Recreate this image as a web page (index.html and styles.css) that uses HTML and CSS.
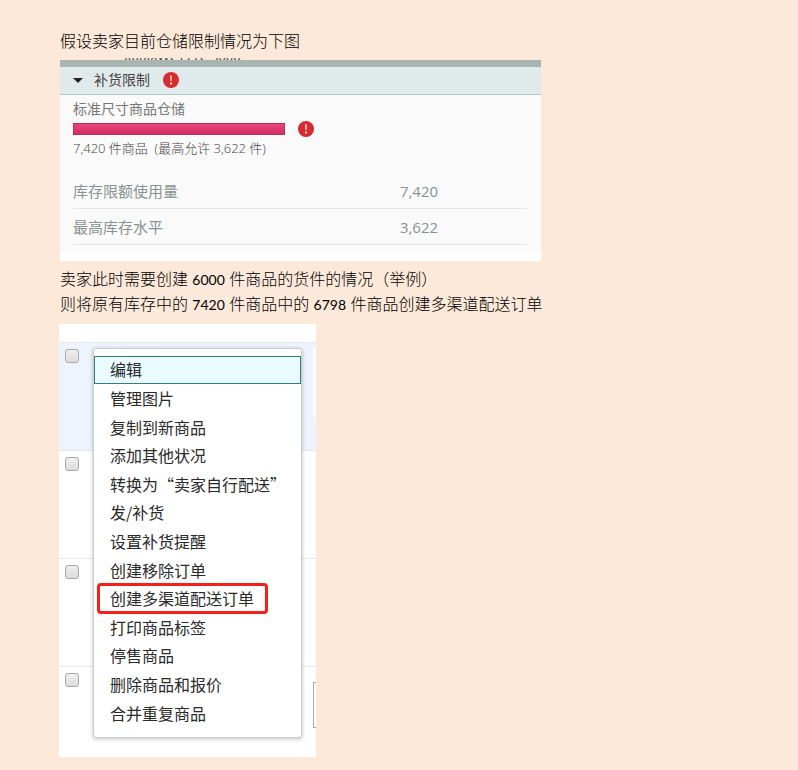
FILE: index.html
```
<!DOCTYPE html>
<html lang="zh-CN">
<head>
    <meta charset="UTF-8">
    <meta name="viewport" content="width=device-width, initial-scale=1.0">
    <title>仓储限制说明</title>
    <link rel="stylesheet" href="styles.css">
</head>
<body>
    <main class="doc">
        <p>假设卖家目前仓储限制情况为下图</p>

        <section class="panel">
            <div class="panel-cut"><span>X00IXWCYYTC 3000</span></div>
            <div class="panel-header">
                <span class="caret"></span>
                <span>补货限制</span>
                <svg class="alert" viewBox="0 0 16 16"><circle cx="8" cy="8" r="8"/><path d="M7 3.500h2l-.4 5.500h-1.200zM7 10.500h2v2H7z"/></svg>
            </div>
            <div class="panel-body">
                <div class="label">标准尺寸商品仓储</div>
                <div class="usage">
                    <div class="bar"></div>
                    <svg class="alert" viewBox="0 0 16 16"><circle cx="8" cy="8" r="8"/><path d="M7 3.500h2l-.4 5.500h-1.200zM7 10.500h2v2H7z"/></svg>
                </div>
                <div class="note">7,420 件商品&nbsp; (最高允许 3,622 件)</div>
                <table class="limits">
                    <tr><th scope="row">库存限额使用量</th><td>7,420</td></tr>
                    <tr><th scope="row">最高库存水平</th><td>3,622</td></tr>
                </table>
            </div>
        </section>

        <p>卖家此时需要创建 <span class="num">6000</span> 件商品的货件的情况（举例）</p>
        <p>则将原有库存中的 <span class="num">7420</span> 件商品中的 <span class="num">6798</span> 件商品创建多渠道配送订单</p>

        <section class="listing">
            <div class="row selected"><input type="checkbox" aria-label="商品 1"><span class="field"></span></div>
            <div class="row"><input type="checkbox" aria-label="商品 2"></div>
            <div class="row"><input type="checkbox" aria-label="商品 3"></div>
            <div class="row last"><input type="checkbox" aria-label="商品 4"><span class="field outlined"></span></div>

            <div class="menu">
                <button class="active">编辑</button>
                <button>管理图片</button>
                <button>复制到新商品</button>
                <button>添加其他状况</button>
                <button>转换为“卖家自行配送”</button>
                <button>发/补货</button>
                <button>设置补货提醒</button>
                <button>创建移除订单</button>
                <button class="marked">创建多渠道配送订单</button>
                <button>打印商品标签</button>
                <button>停售商品</button>
                <button>删除商品和报价</button>
                <button>合并重复商品</button>
            </div>
        </section>
    </main>
</body>
</html>
```
FILE: styles.css
```
* {
    box-sizing: border-box;
}
body {
    margin: 0;
    background: #fde9da;
    font-family: Lato, "Noto Sans CJK SC", sans-serif;
    font-size: 16px;
    line-height: 24px;
    color: #000;
}
.doc {
    padding: 29px 60px 13px;
}
.doc p {
    margin: 0;
    font-weight: 300;
}
.num {
    font-size: 14px;
    font-weight: 400;
}

/* storage limits */
.panel {
    max-width: 481px;
    margin: 5px 0 6px;
    padding-bottom: 8px;
    background: #fff;
    font-family: "Open Sans", "Noto Sans CJK SC", sans-serif;
}
.panel-cut {
    display: flex;
    align-items: flex-end;
    height: 9px;
    padding-left: 64px;
    overflow: hidden;
    background: #fde9da;
    border-bottom: 7px solid #a8b5b3;
    font-size: 13px;
    line-height: 8px;
    color: #444;
}
.panel-header {
    display: flex;
    align-items: center;
    height: 28px;
    padding: 0 0 1px 13px;
    background: #e1eaea;
    border-bottom: 1px solid #b6c9c7;
    font-size: 14px;
    color: #444;
}
.caret {
    margin-right: 11px;
    border: 5px solid transparent;
    border-top-color: #222;
    border-bottom: 0;
}
.alert {
    width: 16px;
    height: 16px;
    margin-left: 13px;
    fill: #d92b2f;
}
.alert path {
    fill: #fbd9b8;
}
.panel-body {
    padding: 3px 14px 8px 13px;
    background: #fafafa;
    color: #777;
}
.label {
    font-size: 14px;
    line-height: 22px;
}
.usage {
    display: flex;
    align-items: center;
    height: 18px;
}
.bar {
    width: 212px;
    height: 12px;
    background: linear-gradient(#e8487c, #d42c63);
    border: 1px solid #b72d5b;
}
.note {
    font-size: 13px;
    font-weight: 300;
    line-height: 20px;
    color: #444;
}
.limits {
    width: 100%;
    margin-top: 14px;
    border-collapse: collapse;
    font-size: 15px;
    color: #889391;
}
.limits th,
.limits td {
    height: 36px;
    padding: 2px 0 0;
    border-bottom: 1px solid #e4e6e6;
    font-weight: 400;
    text-align: left;
}
.limits td {
    width: 28%;
}

/* product list */
.listing {
    position: relative;
    max-width: 257px;
    margin: 7px 0 0 -1px;
    padding-top: 18px;
    background: #fff;
    font-family: "Noto Sans CJK SC", sans-serif;
}
.row {
    display: flex;
    justify-content: space-between;
    height: 108px;
    padding: 6px 0 0 6px;
    border-top: 1px solid #e8e8e8;
}
.row.selected {
    background: #edf4fe;
}
.row.last {
    height: 91px;
}
.row input {
    appearance: none;
    width: 14px;
    height: 14px;
    margin: 0;
    background: linear-gradient(#eee, #dcdcdc);
    border: 1px solid #a9a9a9;
    border-radius: 3px;
}
.field {
    width: 3px;
    height: 68px;
    background: #fff;
}
.field.outlined {
    height: 46px;
    margin-top: 9px;
    border: 1px solid #aaa;
    border-right: 0;
}
.menu {
    position: absolute;
    top: 24px;
    bottom: 19px;
    left: 34px;
    width: 209px;
    display: flex;
    flex-direction: column;
    padding: 7px 0 9px;
    background: #fff;
    border: 1px solid #ccc;
    border-radius: 3px;
    box-shadow: 0 1px 4px rgba(0, 0, 0, 0.25);
}
.menu button {
    flex: 1;
    padding: 0 0 1px 15px;
    background: none;
    border: 1px solid transparent;
    font: inherit;
    line-height: 24px;
    text-align: left;
    color: #2a2a2a;
}
.menu .active {
    background: #e9fbff;
    border-color: #2f7f80;
}
.menu .marked {
    align-self: flex-start;
    margin: 0 0 0 4px;
    padding: 0 12px 1px 11px;
    outline: 3px solid #f3201c;
    outline-offset: -2px;
    border-radius: 3px;
}
```
